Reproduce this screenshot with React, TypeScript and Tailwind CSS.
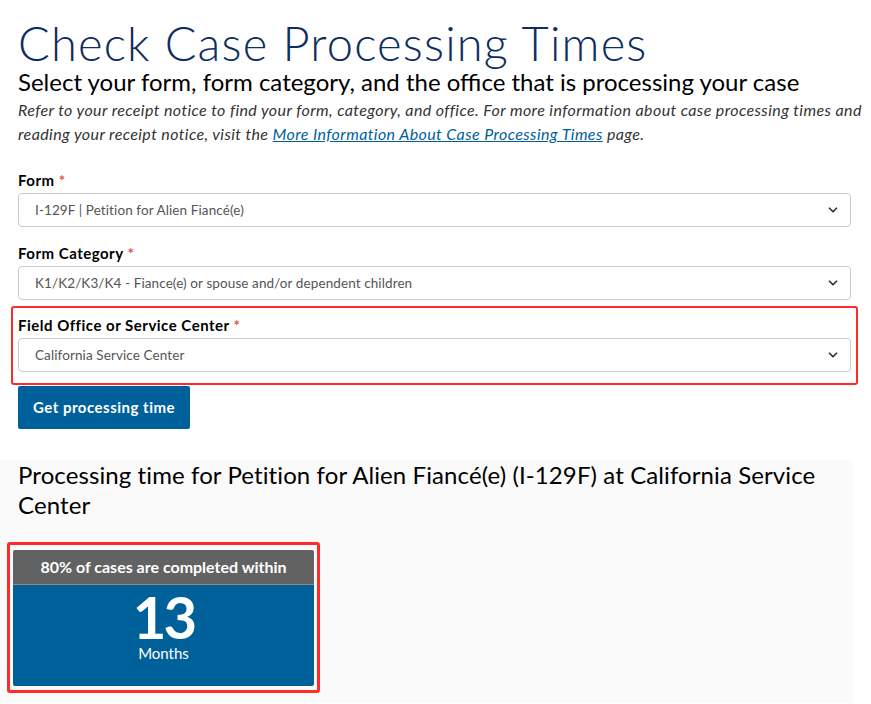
import { ChevronDown } from 'lucide-react';

type SelectFieldProps = {
  label: string;
  value: string;
};

function SelectField({ label, value }: SelectFieldProps) {
  return (
    <div>
      <label className="block text-[15px] font-bold leading-[20px] tracking-[0.5px] text-black">
        {label} <span className="text-[#d9534f]">*</span>
      </label>
      <div className="relative mt-[3px] flex h-[34px] items-center rounded-[4px] border border-[#cccccc] bg-white pl-[16px] pr-[10px]">
        <span className="flex-1 text-[13.5px] tracking-[0.1px] text-[#555555]">{value}</span>
        <ChevronDown className="h-[14px] w-[14px] text-[#333]" strokeWidth={3} />
      </div>
    </div>
  );
}

export default function App() {
  return (
    <div className="min-h-[704px] w-[871px] bg-white font-['Lato','Open_Sans',sans-serif] text-black">
      {/* Header */}
      <div className="pl-[18px] pr-[2px] pt-[15px]">
        <h1 className="text-[47px] font-light leading-[56px] tracking-[1.2px] text-[#0e2d63]">
          Check Case Processing Times
        </h1>
        <h2 className="mt-[-3px] text-[24px] leading-[28px] text-black">
          Select your form, form category, and the office that is processing your case
        </h2>
        <p className="mt-[2px] text-[16px] italic leading-[24px] tracking-[0.4px] text-[#333333]">
          Refer to your receipt notice to find your form, category, and office. For more information about case
          processing times and reading your receipt notice, visit the{' '}
          <a href="#" className="text-[#00609a] underline">
            More Information About Case Processing Times
          </a>{' '}
          page.
        </p>
      </div>

      {/* Form */}
      <div className="mt-[24px] w-[851px] pl-[18px]">
        <SelectField label="Form" value="I-129F | Petition for Alien Fiancé(e)" />
        <div className="mt-[16px]">
          <SelectField label="Form Category" value="K1/K2/K3/K4 - Fiance(e) or spouse and/or dependent children" />
        </div>
        <div className="-mx-[7px] mt-[6px] rounded-[3px] border-2 border-[#ff2a2a] px-[5px] pb-[11px] pt-[7px]">
          <SelectField label="Field Office or Service Center" value="California Service Center" />
        </div>
        <button className="mt-[1px] h-[43px] rounded-[2px] bg-[#00609a] px-[15px] text-[15px] font-bold tracking-[0.5px] text-white">
          Get processing time
        </button>
      </div>

      {/* Result */}
      <div className="mt-[31px] min-h-[243px] w-[853px] bg-[#fafafa] pl-[18px] pr-[20px]">
        <h3 className="text-[24px] font-normal leading-[30px] tracking-[0.1px] text-black">
          Processing time for Petition for Alien Fiancé(e) (I-129F) at California Service Center
        </h3>
        <div className="-ml-[11px] mt-[22px] w-[313px] rounded-[3px] border-[3px] border-[#ff2a2a] px-[3px] pb-[4px] pt-[5px]">
          <div className="overflow-hidden rounded-[2px]">
            <div className="flex h-[35px] items-center justify-center border-b border-[#8a8a8a] bg-[#626262] text-[16px] font-bold text-white">
              80% of cases are completed within
            </div>
            <div className="flex h-[101px] flex-col items-center bg-[#00609a] pt-[5px] text-white">
              <div className="text-[58px] font-bold leading-[54px] tracking-[-3px]">13</div>
              <div className="text-[15px] leading-[18px]">Months</div>
            </div>
          </div>
        </div>
      </div>
    </div>
  );
}
